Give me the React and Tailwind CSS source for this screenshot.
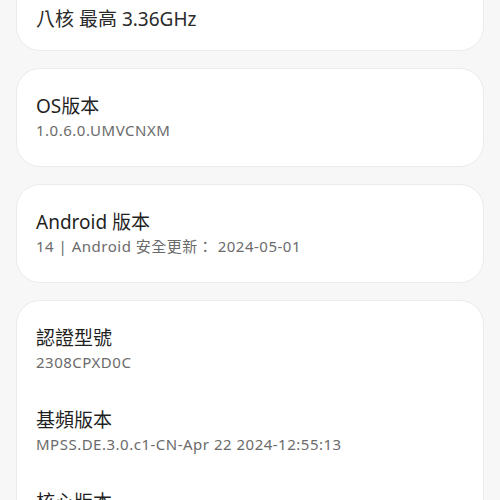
import React from "react";

const font = { fontFamily: '"Noto Sans", "Noto Sans CJK TC", sans-serif' };

function Item({ title, value, first }) {
  return (
    <div className={first ? "" : "mt-[34px]"}>
      <div className="text-[19px] leading-[26px] text-[#1f1f1f]">{title}</div>
      <div className="text-[15px] leading-[22px] tracking-[0.5px] text-[#6b6b6b]">{value}</div>
    </div>
  );
}

function Card({ items }) {
  return (
    <div className="bg-white border border-[#ebebeb] rounded-[24px] px-[19px] pt-[24px] pb-[25px]">
      {items.map((it, i) => (
        <Item key={i} title={it[0]} value={it[1]} first={i === 0} />
      ))}
    </div>
  );
}

export default function App() {
  return (
    <div className="w-[500px] h-[500px] overflow-hidden bg-[#f7f7f7]" style={font}>
      <div className="px-[16px] flex flex-col gap-[17px]">
        <div className="bg-white border border-[#ebebeb] rounded-[24px] px-[19px] pt-[19px] pb-[20px] -mt-[43px]">
          <div className="text-[19px] leading-[26px] mb-[5px] text-[#1f1f1f]">處理器</div>
          <div className="text-[19px] leading-[22px] text-[#2a2a2a]">八核 最高 3.36GHz</div>
        </div>
        <Card items={[["OS版本", "1.0.6.0.UMVCNXM"]]} />
        <Card items={[["Android 版本", "14 | Android 安全更新： 2024-05-01"]]} />
        <Card
          items={[
            ["認證型號", "2308CPXD0C"],
            ["基頻版本", "MPSS.DE.3.0.c1-CN-Apr 22 2024-12:55:13"],
            ["核心版本", "5.15.123-android13-8-g1c1b2d3"],
          ]}
        />
      </div>
    </div>
  );
}
